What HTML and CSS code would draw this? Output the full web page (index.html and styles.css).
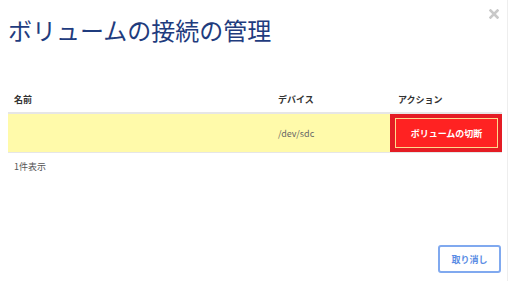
FILE: index.html
```html
<!doctype html>
<html>
<head>
    <meta charset="utf-8">
    <link rel="stylesheet" href="styles.css">
</head>
<body>

<div class='modal'>
    <div class='modal-header'>
        <h1>ボリュームの接続の管理</h1>
        <span class='close'>
            <svg width='10' height='10' viewBox='0 0 10 10'>
                <path d='M1.5 1.5 L8.5 8.5 M8.5 1.5 L1.5 8.5' stroke='#c9c9c9' stroke-width='2.6' stroke-linecap='square'/>
            </svg>
        </span>
    </div>

    <table class='attachments'>
        <colgroup>
            <col class='col-name'>
            <col class='col-device'>
            <col class='col-action'>
        </colgroup>
        <thead>
            <tr>
                <th>名前</th>
                <th>デバイス</th>
                <th class='th-action'>アクション</th>
            </tr>
        </thead>
        <tbody>
            <tr class='highlight'>
                <td></td>
                <td>/dev/sdc</td>
                <td class='action-cell'><button class='btn-detach'>ボリュームの切断</button></td>
            </tr>
        </tbody>
    </table>
    <div class='count'>1件表示</div>

    <div class='modal-footer'>
        <button class='btn-cancel'>取り消し</button>
    </div>
</div>

</body>
</html>
```

FILE: styles.css
```css
html, body {
    margin: 0;
    background: #fff;
}

body {
    font-family: "Noto Sans CJK JP", "Noto Sans", sans-serif;
}

.modal {
    width: 508px;
    height: 281px;
    box-sizing: border-box;
    border-right: 1px solid #eeeeee;
    padding: 0 6px 8px 8px;
    display: flex;
    flex-direction: column;
}

.modal-header {
    display: flex;
    justify-content: space-between;
    align-items: flex-start;
}

h1 {
    margin: 0;
    padding-top: 13px;
    font-size: 24px;
    line-height: 33px;
    font-weight: 400;
    color: #1f3c7e;
}

.close {
    margin-top: 9px;
    margin-right: 2px;
    line-height: 0;
}

.attachments {
    margin-top: 42px;
    width: 494px;
    border-collapse: collapse;
    table-layout: fixed;
    font-size: 9px;
}

.col-name {
    width: 264px;
}

.col-device {
    width: 118px;
}

.col-action {
    width: 112px;
}

th {
    text-align: left;
    font-weight: 700;
    color: #333;
    height: 24px;
    padding: 0 0 0 6px;
    border-bottom: 2px solid #e6e6e6;
    line-height: 12px;
}

.th-action {
    padding-left: 8px;
}

td {
    height: 38px;
    padding: 0 0 0 6px;
    color: #666;
    border-bottom: 1px solid #e6e6e6;
}

.highlight {
    background: #fffaaa;
}

.action-cell {
    background: #e41c24;
    padding: 4px 4px 4px 5px;
    box-sizing: border-box;
}

.btn-detach {
    display: block;
    width: 103px;
    height: 30px;
    background: #ff2222;
    border: 1px solid #ffd98c;
    color: #fff;
    font-family: inherit;
    font-size: 9px;
    font-weight: 700;
    padding: 0;
}

.count {
    margin-top: 7px;
    padding-left: 6px;
    font-size: 9px;
    line-height: 14px;
    color: #555;
}

.modal-footer {
    margin-top: auto;
    display: flex;
    justify-content: flex-end;
}

.btn-cancel {
    width: 63px;
    height: 28px;
    background: #fff;
    border: 2px solid #80a9ef;
    border-radius: 3px;
    color: #5a8ce4;
    font-family: inherit;
    font-size: 9px;
    font-weight: 700;
    padding: 0;
}
```
